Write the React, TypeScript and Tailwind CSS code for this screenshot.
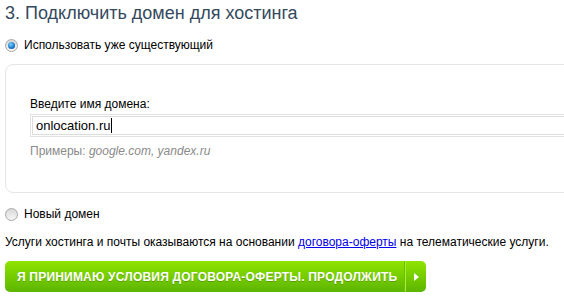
const font = { fontFamily: '"Liberation Sans", Arial, sans-serif' };

const Radio = ({ checked }: { checked?: boolean }) => (
  <span className="relative inline-flex h-[13px] w-[13px] shrink-0 items-center justify-center rounded-full border border-[#a8a8a8] bg-gradient-to-b from-[#d8d8d8] to-[#f6f6f6]">
    {checked && (
      <span className="h-[7px] w-[7px] rounded-full bg-[radial-gradient(circle_at_40%_35%,#7fd0ff_0%,#1f7fd0_55%,#0b3f78_100%)]" />
    )}
  </span>
);

export default function App() {
  return (
    <div
      className="h-[303px] w-[564px] overflow-hidden bg-white text-[12px] text-black"
      style={font}
    >
      <h1 className="pl-[5px] pt-[2px] text-[18px] leading-[22px] font-normal text-[#34495d]">
        3. Подключить домен для хостинга
      </h1>

      <label className="mt-[14px] flex h-[14px] items-center gap-[6px] pl-[5px]">
        <Radio checked />
        <span>Использовать уже существующий</span>
      </label>

      <div className="ml-[5px] mt-[12px] h-[129px] w-[640px] rounded-[8px] border border-[#e6e6e6] pl-[24px] pt-[32px]">
        <p className="h-[15px] leading-[15px]">Введите имя домена:</p>
        <div className="mt-[2px] h-[23px] w-[620px] border border-[#e2e2e2] p-px">
          <div className="flex h-full items-center border border-[#dcdcdc] pl-[3px] text-[13px]">
            onlocation.ru
            <span className="ml-px inline-block h-[15px] w-px bg-black" />
          </div>
        </div>
        <p className="mt-[7px] leading-[15px] text-[#8a8a8a]">
          Примеры: <i>google.com, yandex.ru</i>
        </p>
      </div>

      <label className="mt-[14px] flex h-[14px] items-center gap-[6px] pl-[5px]">
        <Radio />
        <span>Новый домен</span>
      </label>

      <p className="mt-[14px] pl-[5px] leading-[15px]">
        Услуги хостинга и почты оказываются на основании{" "}
        <a href="#" className="text-[#0000ee] underline">
          договора-оферты
        </a>{" "}
        на телематические услуги.
      </p>

      <button
        className="ml-[5px] mt-[11px] flex h-[31px] w-[421px] items-stretch justify-start rounded-[5px] bg-gradient-to-b from-[#8fe400] to-[#5cb500] text-white"
        style={font}
      >
        <span className="flex flex-1 items-center whitespace-nowrap pl-[12px] text-left text-[12px] font-bold tracking-[0.2px] [text-shadow:0_1px_0_rgba(60,110,0,0.45)]">
          Я ПРИНИМАЮ УСЛОВИЯ ДОГОВОРА-ОФЕРТЫ. ПРОДОЛЖИТЬ
        </span>
        <span className="w-px bg-[#6cc000]" />
        <span className="w-px bg-[#a6ec3a]" />
        <span className="flex w-[20px] items-center justify-center">
          <svg width="5" height="8" viewBox="0 0 5 8">
            <path d="M0 0 L5 4 L0 8 Z" fill="#ffffff" />
          </svg>
        </span>
      </button>
    </div>
  );
}
